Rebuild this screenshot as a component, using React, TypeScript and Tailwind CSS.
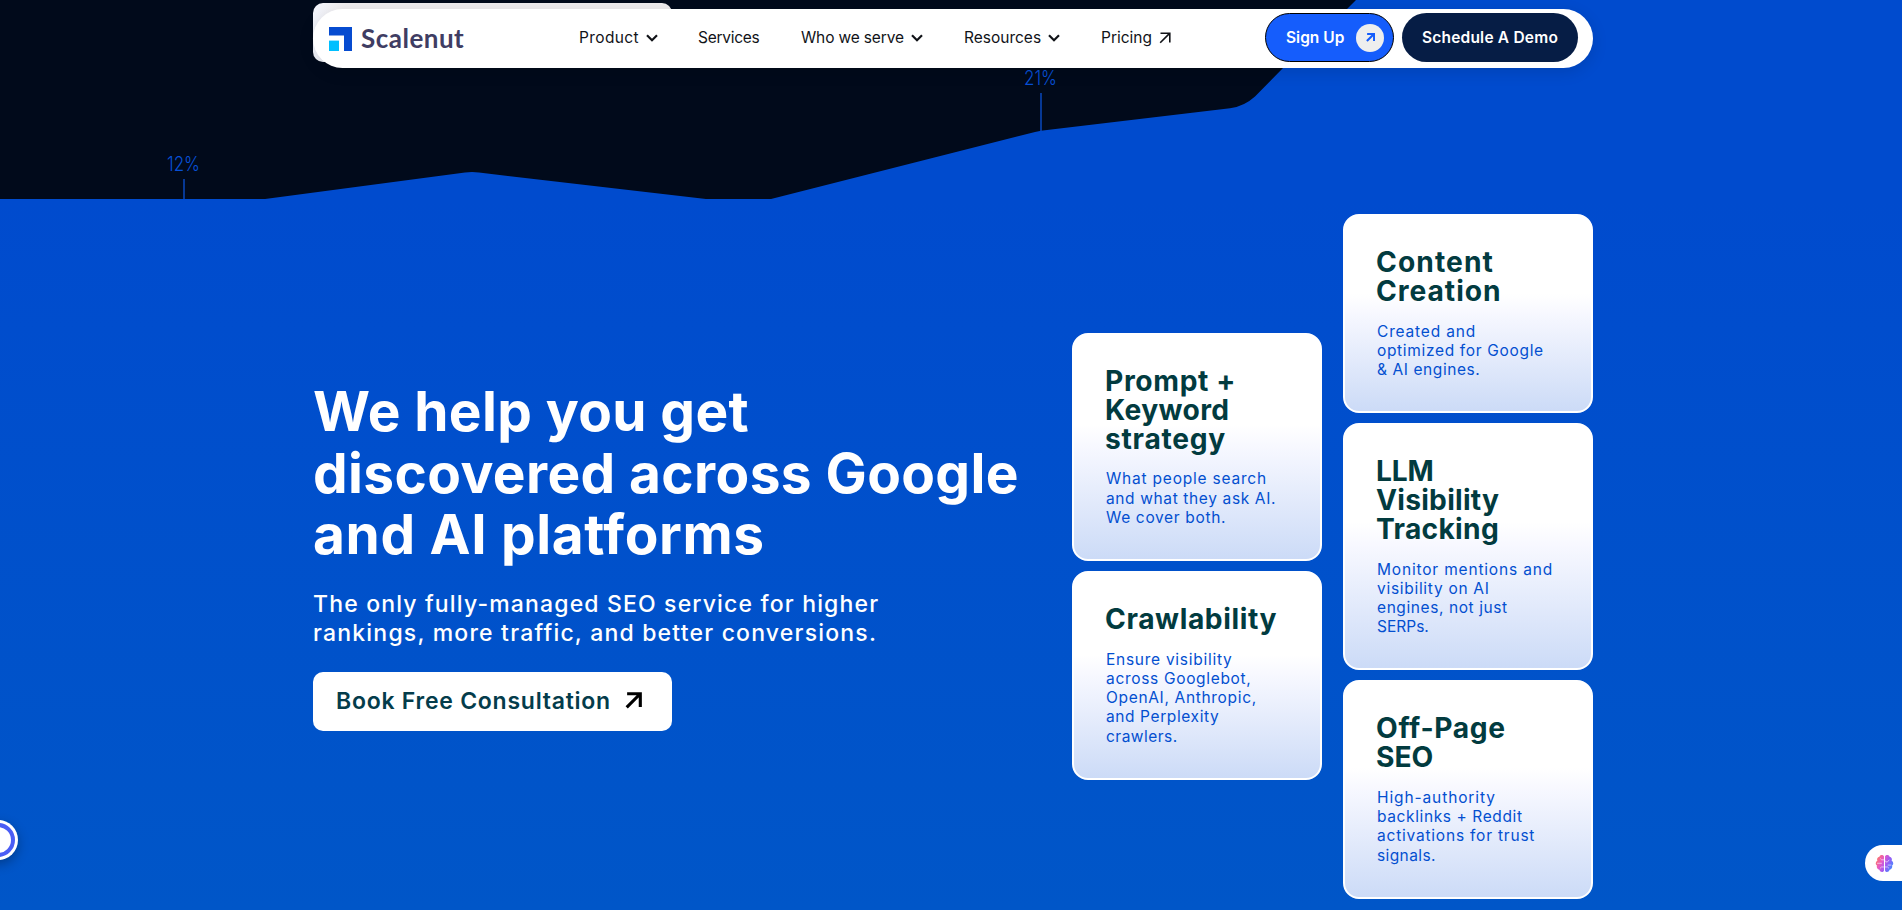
import { clsx } from 'clsx';

type Line = { text: string; className: string };

type CardData = {
  title: Line[];
  body: Line[];
};

const leftCards: CardData[] = [
  {
    title: [
      { text: 'Prompt +', className: 'tracking-[0.64px]' },
      { text: 'Keyword', className: 'tracking-[0.38px]' },
      { text: 'strategy', className: 'tracking-[0.73px]' },
    ],
    body: [
      { text: 'What people search', className: 'tracking-[0.79px]' },
      { text: 'and what they ask AI.', className: 'tracking-[0.63px]' },
      { text: 'We cover both.', className: 'tracking-[0.66px]' },
    ],
  },
  {
    title: [{ text: 'Crawlability', className: 'tracking-[0.6px]' }],
    body: [
      { text: 'Ensure visibility', className: 'tracking-[0.73px]' },
      { text: 'across Googlebot,', className: 'tracking-[0.68px]' },
      { text: 'OpenAI, Anthropic,', className: 'tracking-[0.67px]' },
      { text: 'and Perplexity', className: 'tracking-[0.6px]' },
      { text: 'crawlers.', className: 'tracking-[0.48px]' },
    ],
  },
];

const rightCards: CardData[] = [
  {
    title: [
      { text: 'Content', className: 'tracking-[1.07px]' },
      { text: 'Creation', className: 'tracking-[0.95px]' },
    ],
    body: [
      { text: 'Created and', className: 'tracking-[0.82px]' },
      { text: 'optimized for Google', className: 'tracking-[0.67px]' },
      { text: '& AI engines.', className: 'tracking-[0.58px]' },
    ],
  },
  {
    title: [
      { text: 'LLM', className: 'tracking-[-0.2px]' },
      { text: 'Visibility', className: 'tracking-[0.25px]' },
      { text: 'Tracking', className: 'tracking-[0.3px]' },
    ],
    body: [
      { text: 'Monitor mentions and', className: 'tracking-[0.82px]' },
      { text: 'visibility on AI', className: 'tracking-[0.71px]' },
      { text: 'engines, not just', className: 'tracking-[0.59px]' },
      { text: 'SERPs.', className: 'tracking-normal' },
    ],
  },
  {
    title: [
      { text: 'Off-Page', className: 'tracking-[0.66px]' },
      { text: 'SEO', className: 'tracking-normal' },
    ],
    body: [
      { text: 'High-authority', className: 'tracking-[0.89px]' },
      { text: 'backlinks + Reddit', className: 'tracking-[0.61px]' },
      { text: 'activations for trust', className: 'tracking-[0.79px]' },
      { text: 'signals.', className: 'tracking-[0.39px]' },
    ],
  },
];

const navItems = [
  { label: 'Product', icon: 'chevron', className: 'tracking-[0.37px]' },
  { label: 'Services', icon: null, className: 'tracking-[-0.27px]' },
  { label: 'Who we serve', icon: 'chevron', className: 'tracking-[-0.15px]' },
  { label: 'Resources', icon: 'chevron', className: 'tracking-normal' },
  { label: 'Pricing', icon: 'arrow', className: 'tracking-normal' },
];

function Lines({ lines }: { lines: Line[] }) {
  return (
    <>
      {lines.map((line) => (
        <span key={line.text} className={clsx('block whitespace-nowrap', line.className)}>
          {line.text}
        </span>
      ))}
    </>
  );
}

function Chevron() {
  return (
    <svg viewBox="0 0 12 8" className="h-2 w-3" fill="none" stroke="currentColor" strokeWidth="2.2">
      <path d="M1 1.2 6 6.2 11 1.2" />
    </svg>
  );
}

function Arrow({ className, strokeWidth }: { className: string; strokeWidth: number }) {
  return (
    <svg viewBox="0 0 12 12" className={className} fill="none" stroke="currentColor" strokeWidth={strokeWidth}>
      <path d="M1.5 1.2H10.8V10.5M10.6 1.4 1.2 10.8" />
    </svg>
  );
}

function Logo() {
  return (
    <div className="flex w-[250px] items-center gap-[9px]">
      <svg viewBox="0 0 23 24" className="h-6 w-[23px]">
        <path d="M0 0H23V24H15V8.4H0Z" fill="#064bd0" />
        <path d="M0 13.6H10V24H0Z" fill="#00bfff" />
      </svg>
      <span className="pb-0.5 font-['Lato'] text-[26px] leading-6 font-bold tracking-[0.5px] text-[#3f3d63]">
        Scalenut
      </span>
    </div>
  );
}

function Navbar() {
  return (
    <header className="absolute top-[9px] left-[313px] flex h-[59px] w-[1280px] items-center rounded-full bg-white pr-[15px] pl-4 shadow-[0_4px_16px_rgba(0,0,0,0.12)]">
      <Logo />
      <nav className="grid grid-cols-[119px_103px_163px_137px_auto] pb-0.5 text-[15.5px] leading-5 text-[#111318]">
        {navItems.map((item) => (
          <a key={item.label} className="flex items-center gap-[7px] whitespace-nowrap">
            <span className={item.className}>{item.label}</span>
            {item.icon === 'chevron' && <Chevron />}
            {item.icon === 'arrow' && <Arrow className="size-3" strokeWidth={1.6} />}
          </a>
        ))}
      </nav>
      <div className="ml-auto flex gap-2 pb-0.5 text-[15.5px] font-semibold text-white">
        <button className="flex h-[49px] w-[129px] items-center justify-between rounded-full border border-black bg-[#155dfc] pr-[9px] pl-5">
          Sign Up
          <span className="flex size-7 items-center justify-center rounded-full bg-[#eeeeee] text-[#155dfc]">
            <Arrow className="size-[9px]" strokeWidth={2.8} />
          </span>
        </button>
        <button className="h-[49px] w-[176px] rounded-full bg-[#061d45] tracking-[0.21px]">Schedule A Demo</button>
      </div>
    </header>
  );
}

function GrowthChart() {
  return (
    <svg viewBox="0 0 1902 199" className="block h-[199px] w-full">
      <rect width="1902" height="199" fill="#010a1b" />
      <path
        d="M265 199 465 172.6Q472 171.6 479 172.6L706 199ZM771 199 1035 132Q1041 130.6 1047 130L1230 108.3Q1244 106.5 1255 96.5L1283 68 1347 9 1356 0H1902V199Z"
        fill="#004bce"
      />
      <g stroke="#0844b4" strokeWidth="1.6">
        <path d="M184 179V199" />
        <path d="M1041 93V131" />
      </g>
      <g fill="#0750d6" className="font-['Inter'] text-[20.5px] font-light">
        <text x="167" y="171" textLength="33" lengthAdjust="spacingAndGlyphs">12%</text>
        <text x="1024" y="85" textLength="33" lengthAdjust="spacingAndGlyphs">21%</text>
      </g>
    </svg>
  );
}

function Card({ title, body }: CardData) {
  return (
    <article className="rounded-2xl border-2 border-white bg-[linear-gradient(180deg,#ffffff_0%,#ffffff_40%,#f7f8ff_50%,#ccdbf7_100%)] py-8 pl-[31px]">
      <h3 className="text-[28.2px] leading-[28.8px] font-bold text-[#023b3f]">
        <Lines lines={title} />
      </h3>
      <p className="mt-4 pl-px text-[15.5px] leading-[19.2px] text-[#034fd0]">
        <Lines lines={body} />
      </p>
    </article>
  );
}

function Brain() {
  return (
    <svg viewBox="0 0 18 18" className="size-[19px]" fill="none">
      <defs>
        <linearGradient id="brain" x1="0" y1="0.2" x2="1" y2="0.7">
          <stop offset="0" stopColor="#ff7a59" />
          <stop offset="0.35" stopColor="#e659c8" />
          <stop offset="0.65" stopColor="#9a5cf5" />
          <stop offset="1" stopColor="#3f8cff" />
        </linearGradient>
      </defs>
      <path
        d="M8.5 2.2C7.5 .3 4.6 .6 4.2 2.7 2.3 3 1.5 4.8 2.2 6.3 .3 7.2 .2 9.9 1.8 11 1.2 13 2.4 14.7 4.2 14.9 4.8 17.4 7.7 17.5 8.5 15.8ZM9.5 2.2C10.5 .3 13.4 .6 13.8 2.7 15.7 3 16.5 4.8 15.8 6.3 17.7 7.2 17.8 9.9 16.2 11 16.8 13 15.6 14.7 13.8 14.9 13.2 17.4 10.3 17.5 9.5 15.8Z"
        fill="url(#brain)"
      />
      <path
        d="M8.5 5.5H6.3L5 4.3M2 8.8H6.5M8.5 12.3H6.2L4.8 13.5M9.5 6.5 11.5 7.8 13.5 5.5M12 10.5H15.5M9.5 12.3H11.8L13.2 13.5"
        stroke="#ffffff"
        strokeOpacity="0.7"
        strokeWidth="0.8"
      />
    </svg>
  );
}

export default function App() {
  return (
    <div className="relative h-[910px] w-full overflow-hidden bg-[linear-gradient(180deg,#004bce_0px,#004bce_200px,#0056c8_910px)] font-['Inter',sans-serif]">
      <GrowthChart />

      <main className="flex pl-[313px]">
        <section className="w-[759px] pt-[182px]">
          <h1 className="text-[55px] leading-[61.6px] font-bold text-white">
            <Lines
              lines={[
                { text: 'We help you get', className: 'tracking-[0.37px]' },
                { text: 'discovered across Google', className: 'tracking-[0.39px]' },
                { text: 'and AI platforms', className: 'tracking-[0.64px]' },
              ]}
            />
          </h1>
          <p className="mt-6 text-[23px] leading-[28.8px] font-medium text-white">
            <Lines
              lines={[
                { text: 'The only fully-managed SEO service for higher', className: 'tracking-[1.16px]' },
                { text: 'rankings, more traffic, and better conversions.', className: 'tracking-[1.2px]' },
              ]}
            />
          </p>
          <button className="mt-[25px] flex h-[59px] w-[359px] items-center rounded-[10px] bg-white pb-0.5 pl-[23px] text-[23px] font-semibold tracking-[0.75px] text-[#043c4b]">
            Book Free Consultation
            <Arrow className="ml-[14px] size-[17px] text-black" strokeWidth={2.2} />
          </button>
        </section>

        <div className="flex w-[250px] flex-col gap-[10px] pt-[134px]">
          {leftCards.map((card) => (
            <Card key={card.title[0].text} {...card} />
          ))}
        </div>
        <div className="ml-[21px] flex w-[250px] flex-col gap-[10px] pt-[15px]">
          {rightCards.map((card) => (
            <Card key={card.title[0].text} {...card} />
          ))}
        </div>
      </main>

      {/* sticky button tucked behind the navbar */}
      <div className="absolute top-[3px] left-[313px] h-[59px] w-[359px] rounded-[10px] bg-[linear-gradient(90deg,#f3f5fc_0px,#eeecee_30px)]" />
      <Navbar />

      <div className="absolute top-[820px] -left-[22px] size-10 rounded-full bg-white p-[3px] shadow-[0_4px_12px_rgba(0,0,0,0.3)]">
        <div className="size-full rounded-full border-4 border-[#4a5df5] bg-white" />
      </div>
      <div className="absolute top-[845px] right-0 flex h-9 w-[37px] items-center rounded-l-full bg-white pl-[10px]">
        <Brain />
      </div>
    </div>
  );
}
